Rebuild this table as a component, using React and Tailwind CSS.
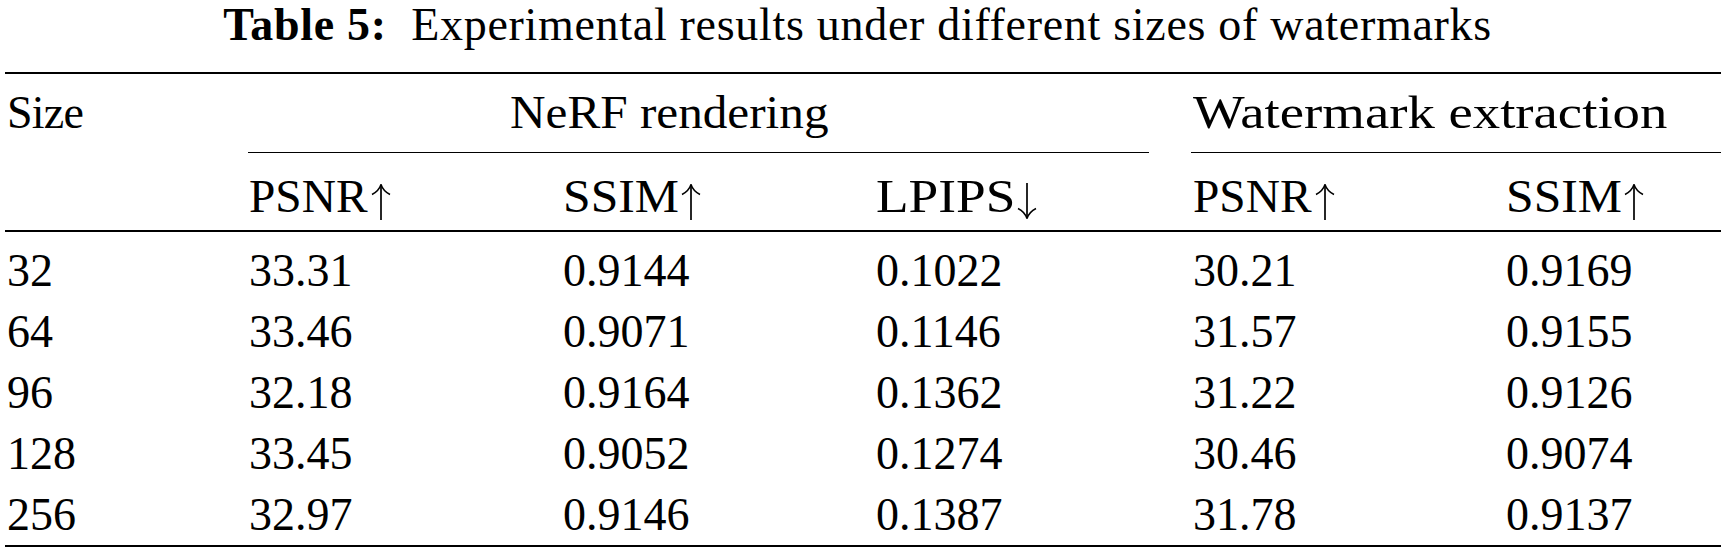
import React from "react";

function Up({ ml = "ml-[3px]" }) {
  return (
    <svg width="20" height="37" viewBox="0 0 20 37" className={`inline-block align-[-8px] ${ml}`}>
      <path d="M10 1.5 V37" stroke="black" strokeWidth="1.7" fill="none" />
      <path d="M10 1.5 C8.5 6 5 9.5 1 11.5 M10 1.5 C11.5 6 15 9.5 19 11.5" stroke="black" strokeWidth="1.5" fill="none" />
    </svg>
  );
}

function Down({ ml = "ml-[1px]" }) {
  return (
    <svg width="20" height="37" viewBox="0 0 20 37" className={`inline-block align-[-8px] ${ml}`}>
      <path d="M10 0 V35.5" stroke="black" strokeWidth="1.7" fill="none" />
      <path d="M10 35.5 C8.5 31 5 27.5 1 25.5 M10 35.5 C11.5 31 15 27.5 19 25.5" stroke="black" strokeWidth="1.5" fill="none" />
    </svg>
  );
}

const rows = [
  ["32", "33.31", "0.9144", "0.1022", "30.21", "0.9169"],
  ["64", "33.46", "0.9071", "0.1146", "31.57", "0.9155"],
  ["96", "32.18", "0.9164", "0.1362", "31.22", "0.9126"],
  ["128", "33.45", "0.9052", "0.1274", "30.46", "0.9074"],
  ["256", "32.97", "0.9146", "0.1387", "31.78", "0.9137"],
];

const cols = "grid grid-cols-[242px_314px_313px_317px_313px_1fr]";

export default function App() {
  return (
    <div className="w-[1721px] h-[554px] bg-white text-black font-['Liberation_Serif','Times_New_Roman',serif] text-[46px] leading-none overflow-hidden">
      <div className="h-[48px] pt-[2px] flex items-center justify-center pr-[6px] whitespace-pre tracking-[0.7px]">
        <span className="font-bold">Table 5:</span>
        <span>{"  "}Experimental results under different sizes of watermarks</span>
      </div>
      <div className="pl-[5px]">
        <div className="mt-[24px] h-[2px] bg-black" />
        <div className={`${cols} h-[78px] items-center`}>
          <div className="pl-[2px] tracking-[-0.8px]">Size</div>
          <div className="col-span-3 pl-[263px]">
            <span className="inline-block origin-left scale-x-[1.07]">NeRF rendering</span>
          </div>
          <div className="col-span-2 pl-[2px]">
            <span className="inline-block origin-left scale-x-[1.19]">Watermark extraction</span>
          </div>
        </div>
        <div className="flex h-[1px]">
          <div className="ml-[243px] w-[901px] bg-black" />
          <div className="ml-[42px] flex-1 bg-black" />
        </div>
        <div className={`${cols} h-[77px] pt-[10px] items-center`}>
          <div />
          <div className="pl-[2px] whitespace-nowrap">
            <span className="inline-block origin-left scale-x-[1.03]">PSNR</span>
            <Up ml="ml-[7px]" />
          </div>
          <div className="pl-[2px] whitespace-nowrap">
            <span className="inline-block origin-left scale-x-[1.08]">SSIM</span>
            <Up ml="ml-[11px]" />
          </div>
          <div className="pl-[2px] whitespace-nowrap">
            <span className="inline-block origin-left scale-x-[1.16]">LPIPS</span>
            <Down ml="ml-[21px]" />
          </div>
          <div className="pl-[2px] whitespace-nowrap">
            <span className="inline-block origin-left scale-x-[1.03]">PSNR</span>
            <Up ml="ml-[7px]" />
          </div>
          <div className="pl-[2px] whitespace-nowrap">
            <span className="inline-block origin-left scale-x-[1.08]">SSIM</span>
            <Up ml="ml-[11px]" />
          </div>
        </div>
        <div className="h-[2px] bg-black" />
        <div className="pt-[8px]">
          {rows.map((r) => (
            <div key={r[0]} className={`${cols} h-[61px] items-center`}>
              {r.map((c, i) => (
                <div key={i} className="pl-[2px]">{c}</div>
              ))}
            </div>
          ))}
        </div>
        <div className="h-[2px] bg-black" />
      </div>
    </div>
  );
}
